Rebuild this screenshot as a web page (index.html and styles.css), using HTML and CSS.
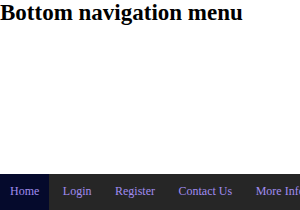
FILE: index.html
```html
<!DOCTYPE html>
<html lang="en">

<head>
    <meta charset="UTF-8">
    <meta name="viewport" content="width=device-width, initial-scale=1.0">
    <title>Bottom navigation menu</title>
    <link rel="stylesheet" href="styles.css">
</head>

<body>
    <h1 class="page-title">Bottom navigation menu</h1>

    <nav class="bottom-nav">
        <a href="#home" class="active">Home</a>
        <a href="#login">Login</a>
        <a href="#register">Register</a>
        <a href="#contact">Contact Us</a>
        <a href="#info">More Info</a>
    </nav>
</body>

</html>
```

FILE: styles.css
```css
html,
body {
    height: 100%;
}

body {
    margin: 0;
    display: flex;
    flex-direction: column;
    background-color: #ffffff;
    font-family: "Liberation Serif", "Times New Roman", serif;
    overflow: hidden;
}

.page-title {
    margin: 0;
    font-size: 23px;
    font-weight: bold;
    color: #000000;
}

.bottom-nav {
    margin-top: auto;
    display: flex;
    gap: 3.5px;
    background-color: #262626;
    white-space: nowrap;
    overflow: hidden;
}

.bottom-nav a {
    flex-shrink: 0;
    padding: 10px 10px 11px;
    font-size: 12px;
    line-height: 15px;
    color: #a08cf0;
    text-decoration: none;
}

.bottom-nav a.active {
    background-color: #050a2c;
}
```
